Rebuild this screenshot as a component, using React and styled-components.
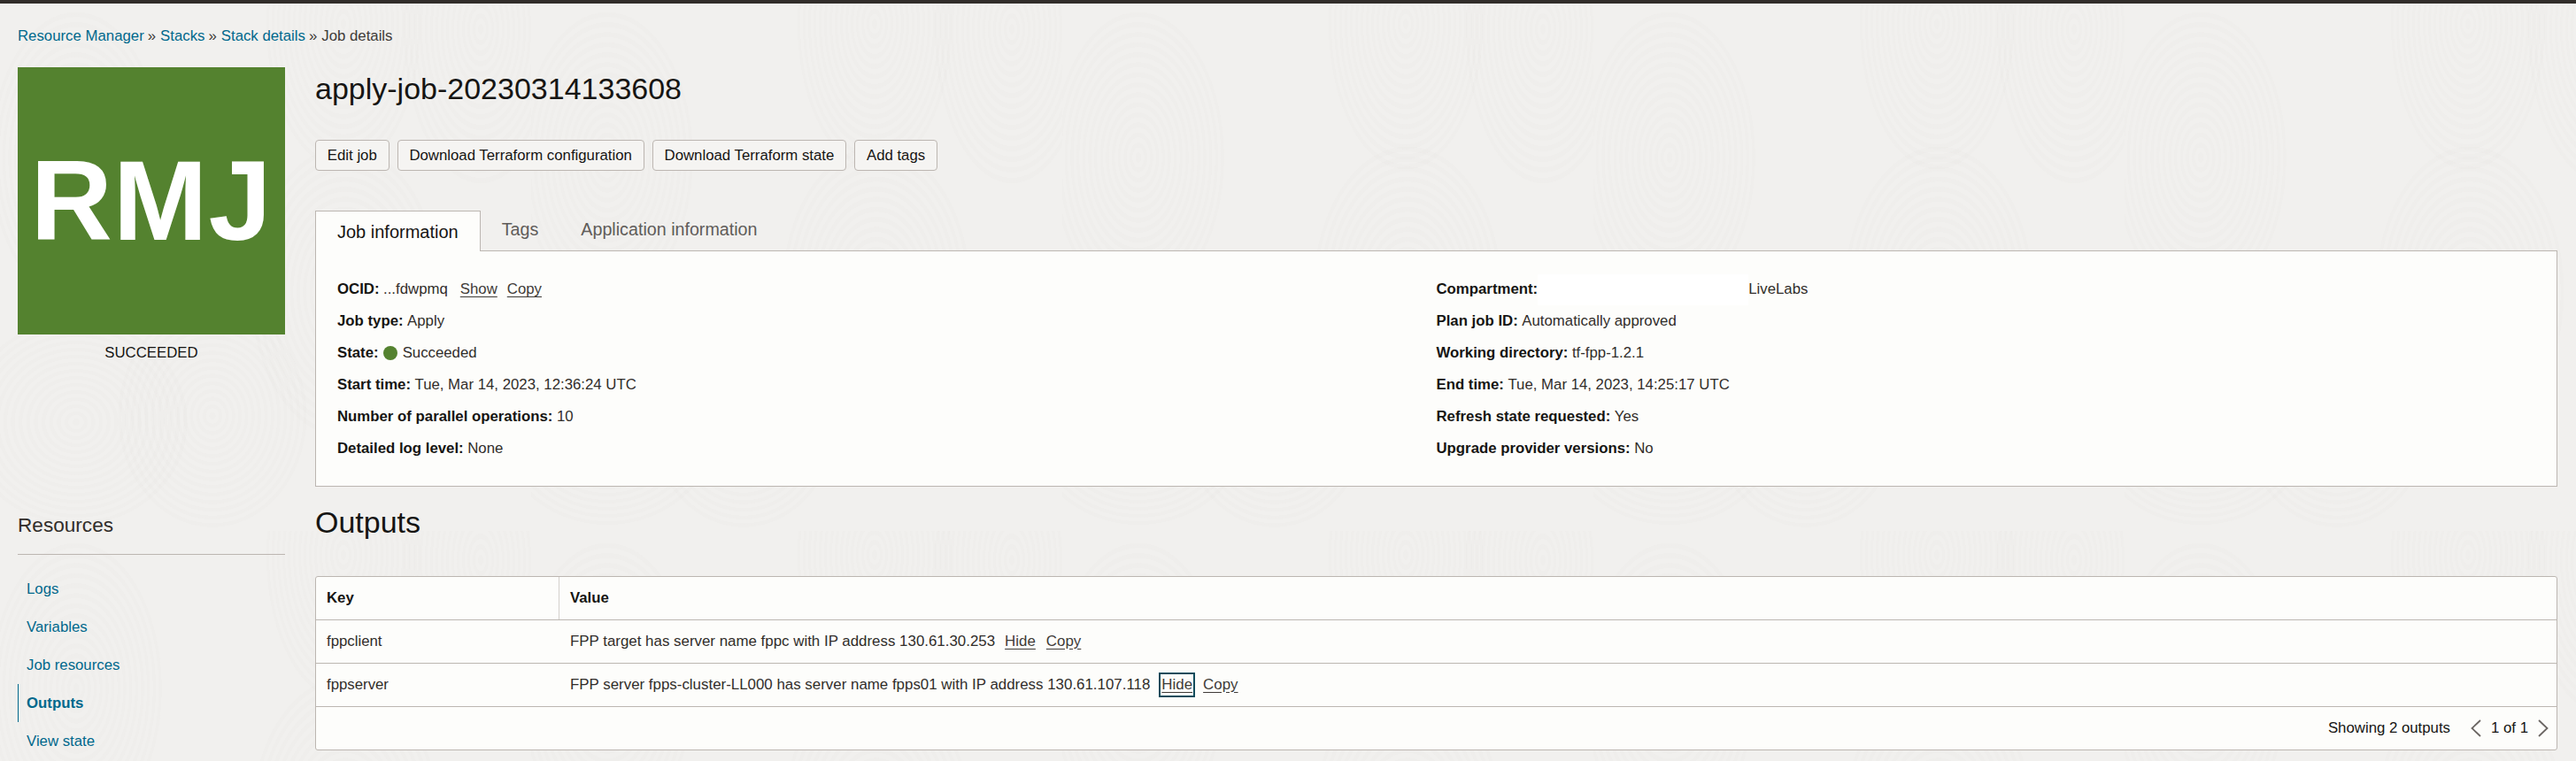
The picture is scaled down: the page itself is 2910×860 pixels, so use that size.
import React from 'react'
import styled, { createGlobalStyle } from 'styled-components'

const infoLeft = [
    { label: 'Job type:', value: 'Apply' },
    { label: 'State:', state: 'Succeeded' },
    { label: 'Start time:', value: 'Tue, Mar 14, 2023, 12:36:24 UTC' },
    { label: 'Number of parallel operations:', value: '10' },
    { label: 'Detailed log level:', value: 'None' },
]

const infoRight = [
    { label: 'Plan job ID:', value: 'Automatically approved' },
    { label: 'Working directory:', value: 'tf-fpp-1.2.1' },
    { label: 'End time:', value: 'Tue, Mar 14, 2023, 14:25:17 UTC' },
    { label: 'Refresh state requested:', value: 'Yes' },
    { label: 'Upgrade provider versions:', value: 'No' },
]

const resources = ['Logs', 'Variables', 'Job resources', 'Outputs', 'View state']
const actions = ['Edit job', 'Download Terraform configuration', 'Download Terraform state', 'Add tags']

const outputs = [
    { key: 'fppclient', value: 'FPP target has server name fppc with IP address 130.61.30.253' },
    { key: 'fppserver', value: 'FPP server fpps-cluster-LL000 has server name fpps01 with IP address 130.61.107.118', focused: true },
]

// concentric grain rings for the page texture, one tile repeats every 600px
function rings(cx, cy, rx, ry) {
    const stops = []
    const count = 15
    for (let i = 0; i < count; i++) {
        const a = ((i + 0.5) / count * 100).toFixed(2)
        const b = ((i + 1) / count * 100).toFixed(2)
        stops.push(`rgba(90,80,70,0.011) ${(i / count * 100).toFixed(2)}%`, `rgba(90,80,70,0.011) ${a}%`, `transparent ${a}%`, `transparent ${b}%`)
    }
    return `radial-gradient(${rx}px ${ry}px at ${cx}px ${cy}px, ${stops.join(',')})`
}

const grain = [
    rings(86, 178, 100, 170),
    rings(86, 477, 130, 120),
    rings(240, 470, 110, 130),
    rings(543, 33, 90, 180),
    rings(388, 27, 90, 170),
    rings(390, 330, 110, 170),
].join(',')

const GlobalStyle = createGlobalStyle`
    html, body {
        margin : 0;
        padding : 0;
        height : 100%;
        overflow : hidden;
    }
    body {
        background-color : #f1f0ee;
        background-image : ${grain};
        background-size : 600px 600px;
        color : #161513;
        font-family : "Liberation Sans", Arial, sans-serif;
        font-size : 16.8px;
    }
    * {
        box-sizing : border-box;
    }
`

const TopBar = styled.div`
    height : 4px;
    background-color : #312d2a;
`

const Breadcrumb = styled.nav`
    display : flex;
    align-items : center;
    gap : 3px;
    height : 20px;
    margin : 27px 0 25px;
    padding-left : 20px;
    color : #3f3b38;
    font-size : 16.8px;
`

const Crumb = styled.a`
    color : #00688c;
    margin-right : 1px;
`

const Sep = styled.span`
    color : #3f3b38;
    margin-right : 2px;
`

const Main = styled.div`
    display : flex;
    gap : 34px;
    padding : 0 21px 0 20px;
`

const Sidebar = styled.aside`
    width : 302px;
    flex-shrink : 0;
`

const Logo = styled.div`
    width : 302px;
    height : 302px;
    display : flex;
    align-items : center;
    justify-content : center;
    background-color : #54822f;
    color : #fff;
    font-size : 128px;
    font-weight : 700;
    line-height : 1;
    letter-spacing : 1px;
`

const LogoStatus = styled.div`
    height : 42px;
    line-height : 42px;
    text-align : center;
    color : #161513;
`

const ResourcesTitle = styled.div`
    margin-top : 158px;
    height : 49px;
    line-height : 32px;
    font-size : 22.6px;
    color : #312d2a;
    border-bottom : 1px solid #bcb6b1;
`

const ResourceList = styled.ul`
    list-style : none;
    margin : 17px 0 0;
    padding : 0;
`

const ResourceItem = styled.li`
    height : 43px;
    line-height : 43px;
    padding-left : 9px;
    border-left : 1px solid ${(p) => (p.$active ? '#00688c' : 'transparent')};
    color : #00688c;
    font-weight : ${(p) => (p.$active ? 700 : 400)};
`

const Content = styled.main`
    flex : 1;
    min-width : 0;
`

const Title = styled.h1`
    margin : 3px 0 0;
    height : 42px;
    line-height : 42px;
    font-size : 34px;
    font-weight : 400;
    color : #161513;
`

const Actions = styled.div`
    display : flex;
    gap : 9px;
    margin-top : 37px;
`

const ActionButton = styled.button`
    height : 35px;
    padding : 0 12.8px;
    border : 1px solid #bcb6b1;
    border-radius : 4px;
    background-color : #f5f4f2;
    color : #161513;
    font-family : inherit;
    font-size : 16.8px;
`

const Tabs = styled.div`
    display : flex;
    height : 46px;
    margin-top : 45px;
    border-bottom : 1px solid #bcb6b1;
`

const Tab = styled.div`
    display : flex;
    align-items : center;
    height : ${(p) => (p.$active ? '46px' : '45px')};
    padding : 0 24px;
    font-size : 20px;
    color : ${(p) => (p.$active ? '#161513' : '#5f5c59')};
    ${(p) => p.$active && `
        background-color : #fdfdfb;
        border : 1px solid #bcb6b1;
        border-bottom : none;
        position : relative;
        margin-bottom : -1px;
        height : 46px;
        padding-top : 1px;
    `}
`

const TabLink = styled(Tab)`
    padding : 0 24px 2px;
    font-size : 19.7px;
`

const InfoPanel = styled.section`
    display : grid;
    grid-template-columns : 1fr 1fr;
    column-gap : 0;
    padding : 25px 24px 24px;
    background-color : #fdfdfb;
    border : 1px solid #bcb6b1;
    border-top : none;
`

const InfoRow = styled.div`
    display : flex;
    align-items : center;
    height : 36px;
    white-space : pre;
`

const Label = styled.b`
    font-weight : 700;
    color : #161513;
`

const Value = styled.span`
    margin-left : ${(p) => p.$gap ?? 4.5}px;
    color : #312d2a;
`

const Dot = styled.span`
    width : 16px;
    height : 16px;
    margin : 0 6px 0 5px;
    border-radius : 50%;
    background-color : #54822f;
`

const Redacted = styled.span`
    width : 238px;
    height : 35px;
    background-color : #fff;
`

const LinkButton = styled.a`
    display : inline-block;
    height : 28px;
    line-height : 24px;
    padding : 0 1px;
    margin-left : ${(p) => p.$gap}px;
    border : 2px solid ${(p) => (p.$focused ? '#0f4c5c' : 'transparent')};
    color : #3f3b38;
    text-decoration : underline;
    text-underline-offset : 3px;
`

const OutputsTitle = styled.h2`
    margin : 19px 0 0;
    height : 42px;
    line-height : 42px;
    font-size : 34px;
    font-weight : 400;
`

const TableCard = styled.div`
    margin-top : 40px;
    background-color : #fdfdfb;
    border : 1px solid #bcb6b1;
    border-radius : 3px;
`

const OutputRow = styled.div`
    display : flex;
    align-items : center;
    height : 49px;
    border-bottom : 1px solid #bcb6b1;
`

const HeadCell = styled.div`
    display : flex;
    align-items : center;
    height : 100%;
    padding-left : 12px;
    font-weight : 700;
    width : ${(p) => p.$width || 'auto'};
    border-right : ${(p) => (p.$width ? '1px solid #d4d0cc' : 'none')};
`

const KeyCell = styled.div`
    width : 275px;
    padding-left : 12px;
    color : #312d2a;
`

const ValueCell = styled.div`
    display : flex;
    align-items : center;
    padding-left : 12px;
    white-space : pre;
    color : #312d2a;
    font-size : 16.9px;
`

const TableFooter = styled.div`
    display : flex;
    align-items : center;
    justify-content : flex-end;
    height : 48px;
    padding-right : 9px;
    gap : 11px;
`

const Showing = styled.span`
    margin-right : 12px;
`

const Chevron = ({ left }) => (
    <svg width="12" height="20" viewBox="0 0 12 20" fill="none" stroke="#6b6663" strokeWidth="1.8">
        <polyline points={left ? '11,1 1.5,10 11,19' : '1,1 10.5,10 1,19'} />
    </svg>
)

function App() {
    return (
        <>
            <GlobalStyle />
            <TopBar />
            <Breadcrumb>
                <Crumb>Resource Manager</Crumb><Sep>»</Sep>
                <Crumb>Stacks</Crumb><Sep>»</Sep>
                <Crumb>Stack details</Crumb><Sep>»</Sep>
                <span>Job details</span>
            </Breadcrumb>
            <Main>
                <Sidebar>
                    <Logo>RMJ</Logo>
                    <LogoStatus>SUCCEEDED</LogoStatus>
                    <ResourcesTitle>Resources</ResourcesTitle>
                    <ResourceList>
                        {resources.map((name) => (
                            <ResourceItem key={name} $active={name === 'Outputs'}>{name}</ResourceItem>
                        ))}
                    </ResourceList>
                </Sidebar>
                <Content>
                    <Title>apply-job-20230314133608</Title>
                    <Actions>
                        {actions.map((a) => <ActionButton key={a}>{a}</ActionButton>)}
                    </Actions>
                    <Tabs>
                        <Tab $active>Job information</Tab>
                        <TabLink>Tags</TabLink>
                        <TabLink>Application information</TabLink>
                    </Tabs>
                    <InfoPanel>
                        <div>
                            <InfoRow>
                                <Label>OCID:</Label>
                                <Value>...fdwpmq</Value>
                                <LinkButton $gap={11}>Show</LinkButton>
                                <LinkButton $gap={5}>Copy</LinkButton>
                            </InfoRow>
                            {infoLeft.map(({ label, value, state }) => (
                                <InfoRow key={label}>
                                    <Label>{label}</Label>
                                    {state ? <><Dot /><Value $gap={0}>{state}</Value></> : <Value>{value}</Value>}
                                </InfoRow>
                            ))}
                        </div>
                        <div>
                            <InfoRow>
                                <Label>Compartment:</Label>
                                <Redacted />
                                <Value $gap={0}>LiveLabs</Value>
                            </InfoRow>
                            {infoRight.map(({ label, value }) => (
                                <InfoRow key={label}><Label>{label}</Label><Value>{value}</Value></InfoRow>
                            ))}
                        </div>
                    </InfoPanel>
                    <OutputsTitle>Outputs</OutputsTitle>
                    <TableCard>
                        <OutputRow>
                            <HeadCell $width="275px">Key</HeadCell>
                            <HeadCell>Value</HeadCell>
                        </OutputRow>
                        {outputs.map(({ key, value, focused }) => (
                            <OutputRow key={key}>
                                <KeyCell>{key}</KeyCell>
                                <ValueCell>
                                    {value}
                                    <LinkButton $gap={focused ? 10 : 8} $focused={focused}>Hide</LinkButton>
                                    <LinkButton $gap={6}>Copy</LinkButton>
                                </ValueCell>
                            </OutputRow>
                        ))}
                        <TableFooter>
                            <Showing>Showing 2 outputs</Showing>
                            <Chevron left />
                            <span>1 of 1</span>
                            <Chevron />
                        </TableFooter>
                    </TableCard>
                </Content>
            </Main>
        </>
    )
}

export default App
